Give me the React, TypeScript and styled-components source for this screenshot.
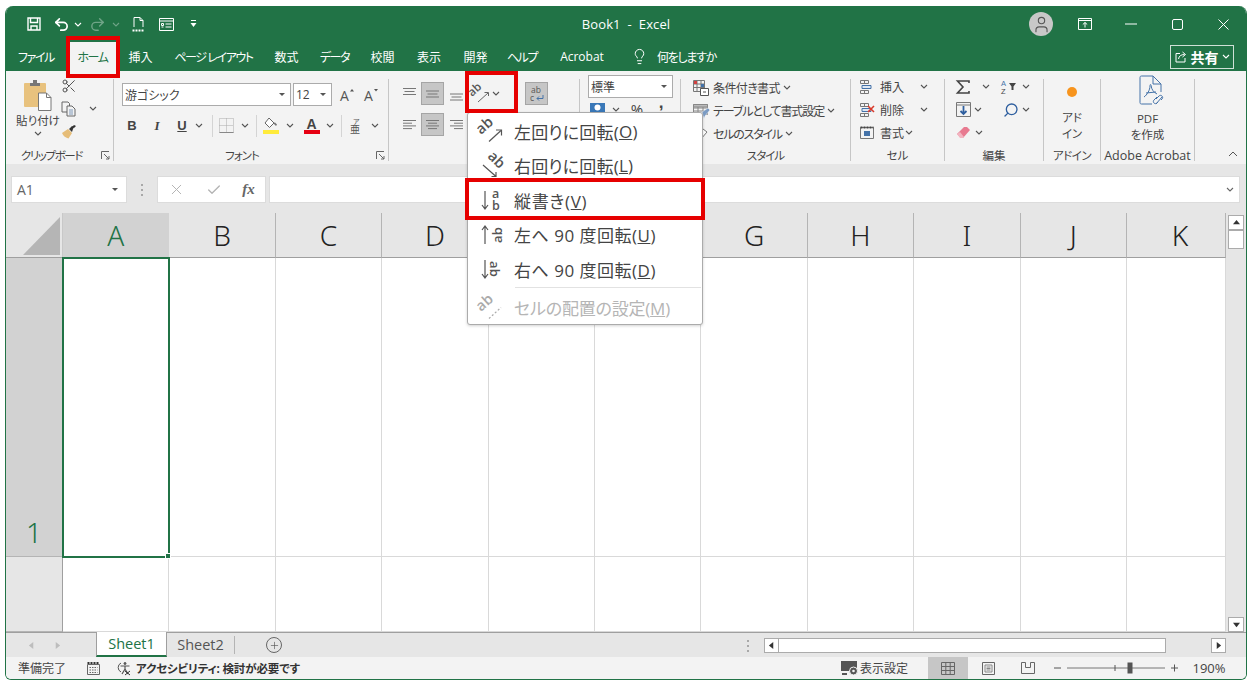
import React from 'react';
import styled, { createGlobalStyle } from 'styled-components';
import { Scissors, Lightbulb, Search, Check, X, Undo2, Redo2, Plus, User } from 'lucide-react';

const GREEN = '#217346';
const FONT = '"Open Sans", "Noto Sans CJK JP", sans-serif';

const GlobalStyle = createGlobalStyle`
  html, body {
    margin: 0;
    background: #fff;
    overflow: hidden;
  }
  body {
    font-family: ${FONT};
    font-feature-settings: "palt";
    color: #444;
  }
  svg {
    overflow: visible;
  }
`;

const Page = styled.div`
  padding: 6px 0 0 5px;
`;

const Window = styled.div`
  position: relative;
  width: 1242px;
  height: 674px;
  box-sizing: border-box;
  border: 1px solid ${GREEN};
  border-top: none;
  border-radius: 8px 8px 6px 6px;
  overflow: hidden;
  display: flex;
  flex-direction: column;
`;

const TitleBar = styled.div`
  height: 36px;
  flex: none;
  background: ${GREEN};
  color: #fff;
  display: grid;
  grid-template-columns: 1fr auto 1fr;
  align-items: center;
`;

const Quick = styled.div`
  display: flex;
  align-items: center;
  padding-left: 19px;
`;

const Slot = styled.span<{ $w: number; $dim?: boolean }>`
  width: ${p => p.$w}px;
  flex: none;
  display: inline-flex;
  align-items: center;
  justify-content: center;
  opacity: ${p => (p.$dim ? 0.35 : 1)};
`;

const Tight = styled.span<{ $s: number }>`
  letter-spacing: ${p => p.$s}px;
`;

const BookTitle = styled.div`
  font-size: 13px;
  letter-spacing: 0.1px;
`;

const WindowControls = styled.div`
  display: flex;
  align-items: center;
  justify-content: flex-end;
`;

const Avatar = styled.div`
  width: 24px;
  height: 24px;
  border-radius: 50%;
  background: #c8c8c8;
  color: #555;
  display: flex;
  align-items: center;
  justify-content: center;
  margin-right: 9px;
`;

const TabStrip = styled.div`
  height: 29px;
  flex: none;
  background: ${GREEN};
  color: #fff;
  display: flex;
  align-items: center;
  font-size: 12px;
`;

const TabItem = styled.div<{ $w: number; $active?: boolean; $kana?: boolean }>`
  width: ${p => p.$w}px;
  height: 29px;
  flex: none;
  display: flex;
  align-items: center;
  justify-content: center;
  white-space: nowrap;
  letter-spacing: ${p => (p.$kana ? '-1.4px' : '0')};
  background: ${p => (p.$active ? '#f3f3f3' : 'transparent')};
  color: ${p => (p.$active ? GREEN : '#fff')};
`;

const TellMe = styled.div`
  display: flex;
  align-items: center;
  gap: 9px;
  margin-left: 14px;
`;

const ShareButton = styled.div`
  margin-left: auto;
  margin-right: 12px;
  width: 64px;
  height: 24px;
  box-sizing: border-box;
  border: 1px solid #cfe0d6;
  display: flex;
  align-items: center;
  justify-content: center;
  gap: 3px;
  font-size: 14px;
  font-weight: 700;
`;

const Ribbon = styled.div`
  height: 93px;
  flex: none;
  box-sizing: border-box;
  padding-top: 8px;
  background: #f3f3f3;
  display: flex;
  font-size: 12px;
  color: #444;
`;

const Group = styled.div<{ $w: number }>`
  width: ${p => p.$w}px;
  height: 82px;
  flex: none;
  box-sizing: border-box;
  border-right: 1px solid #c6c6c6;
  display: flex;
  flex-direction: column;
`;

const GroupBody = styled.div<{ $pad?: number; $top?: number }>`
  height: 60px;
  flex: none;
  box-sizing: border-box;
  padding-left: ${p => p.$pad ?? 0}px;
  margin-top: ${p => p.$top ?? 0}px;
  display: flex;
  flex-direction: column;
`;

const GroupLabel = styled.div<{ $shift?: number; $tight?: number; $size?: number }>`
  margin-top: auto;
  margin-bottom: -2px;
  height: 15px;
  line-height: 15px;
  font-size: ${p => p.$size ?? 11.5}px;
  letter-spacing: ${p => p.$tight ?? 0}px;
  position: relative;
  display: grid;
  grid-template-columns: 1fr auto 1fr;
  align-items: center;
  white-space: nowrap;
  padding-right: ${p => p.$shift ?? 0}px;
`;

const Launcher = styled.span`
  position: absolute;
  right: 3px;
  top: 3px;
  display: inline-flex;
`;

const LabelText = styled.span`
  grid-column: 2;
`;

const PasteRow = styled.div`
  display: flex;
  height: 60px;
`;

const PasteColumn = styled.div`
  width: 58px;
  margin-left: 3px;
  flex: none;
  display: flex;
  flex-direction: column;
  align-items: center;
  font-size: 11.5px;
  line-height: 14px;
`;

const PasteText = styled.div`
  margin-top: 3px;
  margin-bottom: 3px;
  white-space: nowrap;
`;

const ClipColumn = styled.div`
  display: flex;
  flex-direction: column;
  margin-top: -4px;
  margin-left: -6px;
`;

const Row = styled.div<{ $h?: number; $mt?: number }>`
  display: flex;
  flex: none;
  align-items: center;
  height: ${p => p.$h ?? 23}px;
  margin-top: ${p => p.$mt ?? 0}px;
  white-space: nowrap;
`;

const Combo = styled.div<{ $w: number }>`
  width: ${p => p.$w}px;
  height: 23px;
  box-sizing: border-box;
  flex: none;
  background: #fff;
  border: 1px solid #ababab;
  display: flex;
  align-items: center;
  justify-content: space-between;
  padding: 0 5px 0 2px;
  margin-right: 2px;
  font-size: 12px;
`;

const DownMark = styled.span`
  width: 0;
  height: 0;
  border-left: 3px solid transparent;
  border-right: 3px solid transparent;
  border-top: 3px solid #555;
`;

const StrongMark = styled.span<{ $italic?: boolean; $under?: boolean; $serif?: boolean }>`
  font-family: ${p => (p.$serif ? '"Liberation Serif", serif' : '"Liberation Sans", sans-serif')};
  font-weight: 700;
  font-size: 13px;
  color: #444;
  font-style: ${p => (p.$italic ? 'italic' : 'normal')};
  text-decoration: ${p => (p.$under ? 'underline' : 'none')};
`;

const PercentMark = styled.span`
  font-size: 15px;
  line-height: 16px;
`;

const CommaMark = styled.span`
  font-family: "Liberation Sans", sans-serif;
  font-weight: 700;
  font-size: 17px;
  line-height: 12px;
  transform: translateY(-6px);
`;

const Divider = styled.span`
  width: 1px;
  height: 22px;
  background: #d4d4d4;
  flex: none;
`;

const Toggle = styled.span`
  width: 23px;
  height: 23px;
  flex: none;
  box-sizing: border-box;
  background: #c6c6c6;
  border: 1px solid #a5a5a5;
  display: inline-flex;
  align-items: center;
  justify-content: center;
`;

const Mirror = styled.span`
  display: inline-flex;
  transform: scaleX(-1);
`;

const StackedCaption = styled.div`
  display: flex;
  flex-direction: column;
  align-items: center;
  text-align: center;
  line-height: 16px;
  font-size: 11.5px;
`;

const CollapseMark = styled.div`
  margin-left: 33px;
  margin-top: 72px;
  width: 10px;
  height: 6px;
  display: flex;
`;

const FormulaBar = styled.div`
  height: 49px;
  flex: none;
  box-sizing: border-box;
  padding: 12px 6px 10px 5px;
  background: #e6e6e6;
  display: flex;
  align-items: stretch;
`;

const NameBox = styled.div`
  width: 116px;
  background: #fff;
  border: 1px solid #dcdcdc;
  box-sizing: border-box;
  display: flex;
  align-items: center;
  justify-content: space-between;
  padding: 0 8px 0 5px;
  font-size: 14px;
  color: #666;
`;

const Grip = styled.div<{ $w: number }>`
  width: ${p => p.$w}px;
  flex: none;
  display: flex;
  align-items: center;
  justify-content: center;
  color: #aaa;
`;

const FormulaButtons = styled.div`
  width: 109px;
  background: #fff;
  border: 1px solid #dcdcdc;
  box-sizing: border-box;
  display: flex;
  align-items: center;
  justify-content: space-around;
  color: #b4b4b4;
  margin-right: 3px;
`;

const Fx = styled.span`
  font-family: "Liberation Serif", serif;
  font-style: italic;
  font-size: 15px;
  font-weight: 700;
  color: #666;
`;

const FormulaInput = styled.div`
  flex: 1;
  background: #fff;
  border: 1px solid #dcdcdc;
  display: flex;
  align-items: center;
  justify-content: flex-end;
  padding-right: 5px;
`;

const SheetArea = styled.div`
  height: 419px;
  flex: none;
  display: flex;
  background: #e6e6e6;
`;

const CellGrid = styled.div`
  width: 1220px;
  flex: none;
  display: grid;
  grid-template-columns: 57px repeat(10, 106.4px) 1fr;
  grid-template-rows: 45px 299px 75px;
  background: #fff;
`;

const Corner = styled.div`
  background: #e6e6e6;
  border-bottom: 1px solid #9f9f9f;
  border-right: 1px solid #c8c8c8;
  box-sizing: border-box;
  display: flex;
  align-items: flex-end;
  justify-content: flex-end;
  padding: 0 2px 2px 0;
`;

const ColHead = styled.div<{ $selected?: boolean; $offset?: number }>`
  background: ${p => (p.$selected ? '#d2d2d2' : '#e6e6e6')};
  color: ${p => (p.$selected ? GREEN : '#222')};
  border-bottom: 1px solid ${p => (p.$selected ? GREEN : '#9f9f9f')};
  border-right: 1px solid ${p => (p.$selected ? '#d2d2d2' : '#b4b4b4')};
  box-sizing: border-box;
  display: flex;
  align-items: center;
  justify-content: center;
  padding-left: ${p => p.$offset ?? 0}px;
  font-family: "Noto Sans", sans-serif;
  font-weight: 300;
  font-size: 28px;
`;

const RowHead = styled.div<{ $selected?: boolean }>`
  background: ${p => (p.$selected ? '#d2d2d2' : '#e6e6e6')};
  color: ${GREEN};
  border-right: 1px solid #9f9f9f;
  border-bottom: 1px solid #b4b4b4;
  box-sizing: border-box;
  display: flex;
  align-items: flex-end;
  justify-content: center;
  padding-bottom: 6px;
  font-family: "Noto Sans", sans-serif;
  font-weight: 300;
  font-size: 28px;
  line-height: 36px;
`;

const Cell = styled.div<{ $active?: boolean }>`
  position: relative;
  box-sizing: border-box;
  background: #fff;
  border-right: 1px solid #d9d9d9;
  border-bottom: 1px solid #d9d9d9;
  ${p =>
    p.$active &&
    `
    outline: 2px solid ${GREEN};
    outline-offset: -1px;
    z-index: 1;
    &::after {
      content: '';
      position: absolute;
      right: -3px;
      bottom: -3px;
      width: 4px;
      height: 4px;
      background: ${GREEN};
      border: 1px solid #fff;
    }
  `}
`;

const VScroll = styled.div`
  flex: 1;
  box-sizing: border-box;
  padding: 2px 2px 0;
  display: flex;
  flex-direction: column;
`;

const ScrollButton = styled.div<{ $h: number; $w?: number }>`
  height: ${p => p.$h}px;
  width: ${p => (p.$w ? `${p.$w}px` : 'auto')};
  flex: none;
  box-sizing: border-box;
  background: #fff;
  border: 1px solid #ababab;
  display: flex;
  align-items: center;
  justify-content: center;
`;

const ScrollSpacer = styled.div`
  flex: 1;
`;

const SheetBar = styled.div`
  height: 25px;
  flex: none;
  box-sizing: border-box;
  background: #e6e6e6;
  border-top: 1px solid #9f9f9f;
  display: flex;
  align-items: stretch;
  font-size: 14.5px;
`;

const SheetTab = styled.div<{ $active?: boolean; $w: number }>`
  width: ${p => p.$w}px;
  margin-top: -1px;
  flex: none;
  box-sizing: border-box;
  display: flex;
  align-items: center;
  justify-content: center;
  color: ${p => (p.$active ? GREEN : '#555')};
  background: ${p => (p.$active ? '#fff' : 'transparent')};
  border-bottom: ${p => (p.$active ? `2px solid ${GREEN}` : 'none')};
  border-left: ${p => (p.$active ? '1px solid #9f9f9f' : 'none')};
  border-right: ${p => (p.$active ? '1px solid #9f9f9f' : 'none')};
`;

const TabSep = styled.span`
  width: 1px;
  height: 18px;
  align-self: center;
  background: #b4b4b4;
  margin-right: 28px;
`;

const AddSheet = styled.span`
  width: 16px;
  height: 16px;
  align-self: center;
  box-sizing: border-box;
  border: 1px solid #666;
  border-radius: 50%;
  color: #555;
  display: flex;
  align-items: center;
  justify-content: center;
`;

const HScroll = styled.div`
  margin-left: auto;
  margin-right: 20px;
  padding: 5px 0 4px;
  display: flex;
  align-items: stretch;
`;

const HDots = styled(Grip)`
  margin-right: 4px;
`;

const HThumb = styled.div`
  width: 387px;
  box-sizing: border-box;
  background: #fff;
  border: 1px solid #ababab;
  border-left: none;
  margin-right: 45px;
`;

const StatusBar = styled.div`
  flex: 1;
  background: #f3f3f3;
  display: flex;
  align-items: center;
  font-size: 12px;
  color: #444;
`;

const ReadyText = styled.span`
  margin-left: 12px;
  width: 69px;
`;

const A11yText = styled.span`
  margin-left: 4px;
  font-size: 11.5px;
  font-weight: 700;
  letter-spacing: -0.15px;
  color: #333;
`;

const DisplaySettings = styled.div`
  margin-left: auto;
  display: flex;
  align-items: center;
  font-size: 12px;
  margin-right: 20px;
`;

const ViewButton = styled.div<{ $active?: boolean }>`
  width: 40px;
  height: 22px;
  display: flex;
  align-items: center;
  justify-content: center;
  background: ${p => (p.$active ? '#c6c6c6' : 'transparent')};
`;

const ZoomText = styled.span`
  width: 54px;
  margin: 0 10px 0 4px;
  text-align: center;
  font-size: 13px;
`;

const Menu = styled.div`
  position: absolute;
  left: 461px;
  top: 106px;
  width: 236px;
  height: 213px;
  box-sizing: border-box;
  background: #fff;
  border: 1px solid #ababab;
  border-radius: 3px;
  box-shadow: 0 1px 3px rgba(0, 0, 0, 0.18);
  padding-top: 1px;
  z-index: 5;
`;

const MenuItem = styled.div<{ $disabled?: boolean; $h?: number }>`
  height: ${p => p.$h ?? 34.5}px;
  display: flex;
  align-items: center;
  font-size: 17px;
  letter-spacing: 0.2px;
  color: ${p => (p.$disabled ? '#b5b5b5' : '#444')};
`;

const MenuIcon = styled.span`
  width: 46px;
  flex: none;
  display: flex;
  justify-content: center;
`;

const MenuSep = styled.div`
  height: 1px;
  margin: 0 1px 0 47px;
  background: #e2e2e2;
`;

const Key = styled.span`
  text-decoration: underline;
`;

const Highlight = styled.div<{ $x: number; $y: number; $w: number; $h: number }>`
  position: absolute;
  left: ${p => p.$x}px;
  top: ${p => p.$y}px;
  width: ${p => p.$w}px;
  height: ${p => p.$h}px;
  box-sizing: border-box;
  border: 4px solid #e60000;
  z-index: 10;
`;

/* drawn icons */

const Caret = ({ color = '#555' }: { color?: string }) => (
  <svg width="8" height="5" viewBox="0 0 8 5">
    <path d="M1 1l3 3 3-3" fill="none" stroke={color} strokeWidth="1.1" />
  </svg>
);

const LauncherIcon = () => (
  <svg width="9" height="9" viewBox="0 0 9 9" fill="none" stroke="#666">
    <path d="M.5 8V.5H8" />
    <path d="M3 3l5 5M8 5v3H5" />
  </svg>
);

const SaveIcon = () => (
  <svg width="14" height="14" viewBox="0 0 14 14" fill="none" stroke="#fff" strokeWidth="1.4">
    <path d="M1 1h12v12H1z" />
    <path d="M3.5 1v4.5h7V1M4 13V9h6v4" />
  </svg>
);

const DocPreviewIcon = () => (
  <svg width="13" height="15" viewBox="0 0 13 15" fill="none" stroke="#fff">
    <path d="M2 10V.5h6l3 3V10M8 .5v3h3" />
    <path d="M.5 13.5h12" strokeWidth="2" strokeDasharray="2 1" />
  </svg>
);

const FormIcon = () => (
  <svg width="15" height="13" viewBox="0 0 15 13" fill="none" stroke="#fff">
    <path d="M.5.5h14v12H.5z" />
    <path d="M.5 3h14M2.5 5.5h2v2h-2zM2.5 9h2M6.5 6h6M6.5 9h6" />
  </svg>
);

const CustomizeIcon = () => (
  <svg width="7" height="8" viewBox="0 0 7 8" fill="#fff">
    <path d="M1 0h5v1H1zM.5 3h6L3.5 7z" />
  </svg>
);

const RibbonModeIcon = () => (
  <svg width="14" height="12" viewBox="0 0 14 12" fill="none" stroke="#fff">
    <path d="M.5.5h13v11H.5zM.5 2.5h13" />
    <path d="M7 9.5V4.5M4.8 6.5L7 4.5l2.2 2" />
  </svg>
);

const MinimizeIcon = () => (
  <svg width="12" height="2" viewBox="0 0 12 2">
    <path d="M0 1h12" stroke="#fff" />
  </svg>
);

const MaximizeIcon = () => (
  <svg width="11" height="11" viewBox="0 0 11 11" fill="none" stroke="#fff">
    <rect x=".5" y=".5" width="10" height="10" rx="1.5" />
  </svg>
);

const CloseIcon = () => (
  <svg width="11" height="11" viewBox="0 0 11 11" fill="none" stroke="#fff">
    <path d="M.5.5l10 10M10.5.5l-10 10" />
  </svg>
);

const ShareIcon = () => (
  <svg width="13" height="12" viewBox="0 0 13 12" fill="none" stroke="#fff">
    <path d="M5 2.5H1V11h9V7" />
    <path d="M3.5 8c.5-3 2.500-4.500 6-4.500M7.500 1l3 2.500-3 2.500" />
  </svg>
);

const PasteIcon = () => (
  <svg width="30" height="32" viewBox="0 0 30 32">
    <rect x="1" y="4" width="22" height="24" rx="1" fill="#e8c27e" />
    <path d="M7 4h10v3H7zM10 1h4v3h-4z" fill="#777" />
    <path d="M15.500 14h8l4.500 4.500v13h-12.500z" fill="#fff" stroke="#777" />
    <path d="M23.500 14v4.500h4.500" fill="none" stroke="#777" />
  </svg>
);

const CopyIcon = () => (
  <svg width="15" height="16" viewBox="0 0 15 16" fill="none" stroke="#666">
    <path d="M1 1h6l1.500 1.500V11H1z" />
    <path d="M6 5h5l3 3v7H6z" fill="#f3f3f3" />
    <path d="M8 9h4M8 11h4M8 13h4" stroke="#7e98b8" />
  </svg>
);

const BrushIcon = () => (
  <svg width="16" height="15" viewBox="0 0 16 15">
    <path d="M1 9l6-4 4 4-3.500 5.500C5 14 2 12 1 9z" fill="#e6bd78" />
    <path d="M8 5l3-3 2 1-1 2-1 3z" fill="#333" />
    <path d="M11 3l2-2 2 1-2 2z" fill="#333" />
  </svg>
);

const GrowIcon = ({ down }: { down?: boolean }) => (
  <svg width="15" height="14" viewBox="0 0 15 14">
    <text x="0" y="13" fontSize="14" fontFamily="Open Sans, sans-serif" fill="#555">A</text>
    <path d={down ? 'M10 1h4l-2 2.500z' : 'M10 3.500h4L12 1z'} fill="#555" />
  </svg>
);

const BorderIcon = () => (
  <svg width="15" height="15" viewBox="0 0 15 15" fill="none" stroke="#aaa">
    <path d="M.5.500h14v14H.5zM7.500.500v14M.5 7.500h14" strokeDasharray="1 1" />
    <path d="M.5 14.500h14" stroke="#888" />
  </svg>
);

const FillIcon = () => (
  <svg width="16" height="17" viewBox="0 0 16 17">
    <path d="M6 1l5 5-4.500 4.500L2 6z" fill="#fff" stroke="#666" />
    <path d="M10 6l3 3 1-1.500-2-2z" fill="#777" />
    <rect x="0" y="13" width="16" height="4" fill="#ffeb3b" />
  </svg>
);

const FontColorIcon = () => (
  <svg width="16" height="17" viewBox="0 0 16 17">
    <text x="2.500" y="11.500" fontSize="14" fontWeight="700" fontFamily="Liberation Sans, sans-serif" fill="#444">A</text>
    <rect x="0" y="13" width="16" height="4" fill="#e60012" />
  </svg>
);

const PhoneticIcon = () => (
  <svg width="12" height="16" viewBox="0 0 12 16">
    <text x="3" y="6" fontSize="7" fill="#555" fontFamily="Noto Sans CJK JP, sans-serif">ア</text>
    <text x="0" y="15" fontSize="10" fill="#555" fontFamily="Noto Sans CJK JP, sans-serif">亜</text>
  </svg>
);

const lineWidths: Record<string, number[]> = {
  left: [13, 9, 13, 9],
  center: [13, 9, 13, 9],
  right: [13, 9, 13, 9],
};

const HAlignIcon = ({ kind }: { kind: 'left' | 'center' | 'right' }) => (
  <svg width="15" height="11" viewBox="0 0 15 11" stroke="#777">
    {lineWidths[kind].map((w, i) => {
      const x = kind === 'left' ? 1 : kind === 'center' ? (15 - w) / 2 : 14 - w;
      return <path key={i} d={`M${x} ${1.5 + i * 2.7}h${w}`} />;
    })}
  </svg>
);

const VAlignIcon = ({ kind }: { kind: 'top' | 'middle' | 'bottom' }) => {
  const start = kind === 'top' ? 1.5 : kind === 'middle' ? 4 : 7;
  return (
    <svg width="15" height="14" viewBox="0 0 15 14" stroke="#777">
      <path d={`M1 ${start}h13M2.500 ${start + 3}h10M1 ${start + 6}h13`} />
    </svg>
  );
};

const abText = (transform: string, size: number, color: string) => (
  <text transform={transform} fontSize={size} fontWeight="600" fontFamily="Open Sans, sans-serif" fill={color}>ab</text>
);

const OrientIcon = () => (
  <svg width="20" height="20" viewBox="0 0 20 20" fill="none">
    {abText('translate(2 13) rotate(-42)', 11.500, '#555')}
    <path d="M8 18L18 9M14.500 8.500H18.500V12" stroke="#666" />
  </svg>
);

const WrapIcon = () => (
  <svg width="18" height="18" viewBox="0 0 18 18" fill="none">
    <text x="3" y="8" fontSize="8.500" fontFamily="Open Sans, sans-serif" fill="#555">ab</text>
    <text x="2" y="16" fontSize="8.500" fontFamily="Open Sans, sans-serif" fill="#555">c</text>
    <path d="M15 10v3.500H9M11 11.500l-2 2 2 2" stroke="#4472a8" />
  </svg>
);

const CurrencyIcon = () => (
  <svg width="18" height="15" viewBox="0 0 18 15">
    <rect x="1" y="1" width="15" height="9" fill="#3a78b8" />
    <circle cx="8.500" cy="5.500" r="3" fill="#fff" />
    <path d="M4 11h12v3H4z" fill="#e6bd78" />
  </svg>
);

const ConditionalIcon = () => (
  <svg width="16" height="16" viewBox="0 0 16 16" fill="none" stroke="#777">
    <path d="M.5.500h11v11H.5zM.5 4h11M.5 7.500h11M4 .5v11M8 .5v11" />
    <path d="M1 1h3v3H1z" fill="#d04040" stroke="none" />
    <path d="M8 4h3v3H8z" fill="#4472a8" stroke="none" />
    <path d="M7.500 8.500h8v7h-8z" fill="#fff" stroke="#555" />
    <path d="M10 12h3" stroke="#555" />
  </svg>
);

const TableFormatIcon = () => (
  <svg width="17" height="16" viewBox="0 0 17 16" fill="none" stroke="#888">
    <path d="M.5 1.500h14v10H.5zM.5 5h14M.5 8h14M5 1.500v10M10 1.500v10" />
    <path d="M.5 1.500h14V4H.5z" fill="#bbb" />
    <path d="M9 9l6-4 2 2-5 6-1 3z" fill="#7c9cc4" stroke="#fff" strokeWidth=".5" />
  </svg>
);

const CellStyleIcon = () => (
  <svg width="16" height="16" viewBox="0 0 16 16">
    <path d="M4 9l6-6 4 3-6 7z" fill="#fff" stroke="#777" />
    <path d="M2 12c2-1 3-1 5 1l-2 2c-2 0-3-1-3-3z" fill="#7c9cc4" />
  </svg>
);

const CellsIcon = ({ kind }: { kind: 'insert' | 'delete' | 'format' }) => (
  <svg width="16" height="16" viewBox="0 0 16 16" fill="none" stroke="#777">
    {kind === 'format' ? (
      <>
        <path d="M1.500 2.500h13v11h-13z" />
        <path d="M1.500 2.500h13" strokeDasharray="2 1" stroke="#444" strokeWidth="2" />
        <path d="M5 6h6v5H5z" fill="#4472a8" stroke="none" />
      </>
    ) : (
      <>
        <path d="M1.500 1.500h8v3h-8zM1.500 11.500h8v3h-8zM5.500 1.500v3M5.500 11.500v3" />
        <path d="M3 6.500h9v3H3z" fill="#dfe8f3" stroke="#4472a8" />
        {kind === 'delete' && <path d="M9 4l6 6M15 4l-6 6" stroke="#d93a2b" strokeWidth="1.600" />}
      </>
    )}
  </svg>
);

const SigmaIcon = () => (
  <svg width="14" height="14" viewBox="0 0 14 14" fill="none" stroke="#444" strokeWidth="1.600">
    <path d="M13 3V1H1.500L7 7l-5.500 6H13v-2" />
  </svg>
);

const SortIcon = () => (
  <svg width="16" height="16" viewBox="0 0 16 16">
    <text x="0" y="7" fontSize="7.500" fill="#4472a8" fontFamily="Liberation Sans, sans-serif">A</text>
    <text x="0" y="15" fontSize="7.500" fill="#444" fontFamily="Liberation Sans, sans-serif">Z</text>
    <path d="M8 4h7l-2.500 3.500V11h-2V7.500z" fill="#444" />
  </svg>
);

const FillDownIcon = () => (
  <svg width="15" height="15" viewBox="0 0 15 15" fill="none" stroke="#777">
    <path d="M.5.500h14v14H.5zM.5 3h14" />
    <path d="M7.500 4v8M4.500 9l3 3 3-3" stroke="#2f5f9f" strokeWidth="1.800" />
  </svg>
);

const EraserIcon = () => (
  <svg width="15" height="13" viewBox="0 0 15 13">
    <path d="M1 8l7-7h3l3 3-7 8H5z" fill="#e87a90" />
    <path d="M1 8l3 4h3l1-1-4-5z" fill="#f3b4c0" />
  </svg>
);

const AcrobatIcon = () => (
  <svg width="30" height="36" viewBox="-5 0 30 36" fill="none" stroke="#4472a8">
    <path d="M14 29H3.500c-1 0-1.500-.5-1.500-1.500v-25c0-1 .5-1.500 1.500-1.500H15l8 8v8" />
    <path d="M15 1v8h8" />
    <path d="M6 22c3-2 6-7 6-11 0-2 1-2 1.200 0 .3 3 2 6 5.800 8M8 18l10-1" strokeWidth="1" />
    <path d="M18 24l3-3c2-2 5 1 3 3l-1 1M20 27l-1 1c-2 2-5-1-3-3l3-3M18 29l6-7" />
  </svg>
);

const CornerTriangle = () => (
  <svg width="37" height="38" viewBox="0 0 37 38">
    <path d="M37 0v38H0z" fill="#b5b5b5" />
  </svg>
);

const Triangle = ({ dir, color = '#333', size = 7 }: { dir: 'up' | 'down' | 'left' | 'right'; color?: string; size?: number }) => {
  const paths = { up: 'M0 6h8L4 1z', down: 'M0 2h8L4 7z', left: 'M6 0v8L1 4z', right: 'M2 0v8l5-4z' };
  return (
    <svg width={size} height={size} viewBox="0 0 8 8">
      <path d={paths[dir]} fill={color} />
    </svg>
  );
};

const DotsIcon = () => (
  <svg width="3" height="12" viewBox="0 0 3 12" fill="#a8a8a8">
    <rect y="0" width="2" height="2" />
    <rect y="5" width="2" height="2" />
    <rect y="10" width="2" height="2" />
  </svg>
);

const MacroIcon = () => (
  <svg width="13" height="13" viewBox="0 0 13 13" fill="none" stroke="#666">
    <path d="M.5 2.500h12v10H.5z" />
    <path d="M.5 1h12" strokeDasharray="2 1" stroke="#333" strokeWidth="2" />
    <path d="M2.500 5.500h8M2.500 8h8M2.500 10.500h8" strokeDasharray="1.500 1" />
  </svg>
);

const A11yIcon = () => (
  <svg width="16" height="15" viewBox="0 0 16 15" fill="none" stroke="#555">
    <path d="M5 2a5 5 0 0 0 0 9" />
    <circle cx="9" cy="2.500" r="1" fill="#555" />
    <path d="M4.500 5h9M9 5v3l-3 5M9 8l3 5" strokeWidth="1.200" />
    <path d="M9 10l5 4M14 10l-5 4" stroke="#333" />
  </svg>
);

const DisplayIcon = () => (
  <svg width="19" height="15" viewBox="0 0 19 15">
    <path d="M0 0h16v10H0z" fill="#555" />
    <circle cx="12.500" cy="10" r="4" fill="#555" stroke="#f3f3f3" />
    <circle cx="12.500" cy="10" r="1.300" fill="#f3f3f3" />
    <path d="M1 13h5" stroke="#555" strokeWidth="2" />
  </svg>
);

const NormalViewIcon = () => (
  <svg width="14" height="13" viewBox="0 0 14 13" fill="none" stroke="#666">
    <path d="M.5.500h13v12H.5zM.5 4.500h13M.5 8.500h13M4.800.5v12M9.200.5v12" />
  </svg>
);

const PageViewIcon = () => (
  <svg width="13" height="13" viewBox="0 0 13 13" fill="none" stroke="#666">
    <path d="M.5.500h12v12H.5z" />
    <path d="M3 3h7v7H3zM4.500 5h4M4.500 6.500h4M4.500 8h4" stroke="#888" />
  </svg>
);

const BreakViewIcon = () => (
  <svg width="14" height="12" viewBox="0 0 14 12" fill="none" stroke="#666">
    <path d="M.5.500v11h13V.5M.5.500h4v5h5v-5h4" />
  </svg>
);

const SliderIcon = () => (
  <svg width="124" height="14" viewBox="0 0 124 14" fill="none" stroke="#555">
    <path d="M0 7h7M117 7h7M120.500 3.500v7" />
    <path d="M13 7h98" stroke="#777" />
    <path d="M61 4v6" />
    <rect x="74" y="2" width="4" height="10" fill="#555" />
  </svg>
);

const CollapseIcon = () => (
  <svg width="10" height="6" viewBox="0 0 10 6">
    <path d="M1 5l4-4 4 4" fill="none" stroke="#555" />
  </svg>
);

const menuStroke = (c: string) => ({ stroke: c, fill: 'none' });

const CcwIcon = ({ color = '#555', dotted }: { color?: string; dotted?: boolean }) => (
  <svg width="24" height="24" viewBox="0 0 24 24">
    {abText('translate(2 16) rotate(-42)', 14.500, color)}
    <path d="M10 22.500L22 11.500" {...menuStroke(color)} strokeWidth="1.200" strokeDasharray={dotted ? '2 2' : undefined} />
    {!dotted && <path d="M17 11h5.500v5.500" {...menuStroke(color)} strokeWidth="1.200" />}
  </svg>
);

const CwIcon = () => (
  <svg width="24" height="24" viewBox="0 0 24 24">
    {abText('translate(8 3) rotate(45)', 14.500, '#555')}
    <path d="M4 11l13 11.500M17 18v4.500h-4.500" {...menuStroke('#555')} strokeWidth="1.200" />
  </svg>
);

const VerticalIcon = () => (
  <svg width="24" height="24" viewBox="0 0 24 24">
    <path d="M6 3v18M3 17l3 4 3-4" {...menuStroke('#555')} strokeWidth="1.200" />
    <text x="13" y="10" fontSize="12.500" fontWeight="600" fontFamily="Open Sans, sans-serif" fill="#555">a</text>
    <text x="13" y="22" fontSize="12.500" fontWeight="600" fontFamily="Open Sans, sans-serif" fill="#555">b</text>
  </svg>
);

const TurnIcon = ({ up }: { up?: boolean }) => (
  <svg width="24" height="24" viewBox="0 0 24 24">
    <path
      d={up ? 'M6 21V3M3 7l3-4 3 4' : 'M6 3v18M3 17l3 4 3-4'}
      {...menuStroke('#555')}
      strokeWidth="1.200"
    />
    {abText(up ? 'translate(23 20) rotate(-90)' : 'translate(11 4) rotate(90)', 13, '#555')}
  </svg>
);

const columns = ['A', 'B', 'C', 'D', 'E', 'F', 'G', 'H', 'I', 'J', 'K'];

const App: React.FC = () => {
  return (
    <Page>
      <GlobalStyle />
      <Window>
        <TitleBar>
          <Quick>
            <Slot $w={18}><SaveIcon /></Slot>
            <Slot $w={9} />
            <Slot $w={18}><Undo2 size={17} strokeWidth={2.4} /></Slot>
            <Slot $w={16}><Caret color="#fff" /></Slot>
            <Slot $w={23} $dim><Redo2 size={17} strokeWidth={2} /></Slot>
            <Slot $w={14} $dim><Caret color="#fff" /></Slot>
            <Slot $w={30}><DocPreviewIcon /></Slot>
            <Slot $w={26}><FormIcon /></Slot>
            <Slot $w={28}><CustomizeIcon /></Slot>
          </Quick>
          <BookTitle>Book1&nbsp; - &nbsp;Excel</BookTitle>
          <WindowControls>
            <Avatar><User size={19} strokeWidth={1.4} /></Avatar>
            <Slot $w={46}><RibbonModeIcon /></Slot>
            <Slot $w={46}><MinimizeIcon /></Slot>
            <Slot $w={46}><MaximizeIcon /></Slot>
            <Slot $w={46}><CloseIcon /></Slot>
          </WindowControls>
        </TitleBar>

        <TabStrip>
          <TabItem $w={60} $kana>ファイル</TabItem>
          <TabItem $w={53} $active $kana>ホーム</TabItem>
          <TabItem $w={43}>挿入</TabItem>
          <TabItem $w={103} $kana>ページ レイアウト</TabItem>
          <TabItem $w={43}>数式</TabItem>
          <TabItem $w={53} $kana>データ</TabItem>
          <TabItem $w={43}>校閲</TabItem>
          <TabItem $w={50}>表示</TabItem>
          <TabItem $w={43}>開発</TabItem>
          <TabItem $w={50} $kana>ヘルプ</TabItem>
          <TabItem $w={70}>Acrobat</TabItem>
          <TellMe>
            <Lightbulb size={17} strokeWidth={1.4} />
            <Tight $s={-1.3}>何をしますか</Tight>
          </TellMe>
          <ShareButton>
            <ShareIcon />
            共有
            <Caret color="#fff" />
          </ShareButton>
        </TabStrip>

        <Ribbon>
          <Group $w={108}>
            <PasteRow>
              <PasteColumn>
                <PasteIcon />
                <PasteText>貼り付け</PasteText>
                <Caret />
              </PasteColumn>
              <ClipColumn>
                <Row $h={22}><Scissors size={16} strokeWidth={1.5} color="#555" /></Row>
                <Row $h={23}><CopyIcon /><Slot $w={34}><Caret /></Slot></Row>
                <Row $h={22}><BrushIcon /></Row>
              </ClipColumn>
            </PasteRow>
            <GroupLabel $shift={16} $tight={-1.4}>
              <LabelText>クリップボード</LabelText>
              <Launcher><LauncherIcon /></Launcher>
            </GroupLabel>
          </Group>

          <Group $w={275}>
            <GroupBody $pad={8} $top={4}>
              <Row>
                <Combo $w={169}>游ゴシック<DownMark /></Combo>
                <Combo $w={39}>12<DownMark /></Combo>
                <Slot $w={26}><GrowIcon /></Slot>
                <Slot $w={22}><GrowIcon down /></Slot>
              </Row>
              <Row $mt={8}>
                <Slot $w={20}><StrongMark>B</StrongMark></Slot>
                <Slot $w={30}><StrongMark $italic $serif>I</StrongMark></Slot>
                <Slot $w={20}><StrongMark $under>U</StrongMark></Slot>
                <Slot $w={14}><Caret /></Slot>
                <Slot $w={6} />
                <Divider />
                <Slot $w={27}><BorderIcon /></Slot>
                <Slot $w={10}><Caret /></Slot>
                <Slot $w={6} />
                <Divider />
                <Slot $w={28}><FillIcon /></Slot>
                <Slot $w={10}><Caret /></Slot>
                <Slot $w={3} />
                <Slot $w={27}><FontColorIcon /></Slot>
                <Slot $w={10}><Caret /></Slot>
                <Slot $w={6} />
                <Divider />
                <Slot $w={28}><PhoneticIcon /></Slot>
                <Slot $w={10}><Caret /></Slot>
              </Row>
            </GroupBody>
            <GroupLabel $shift={18} $tight={-1}>
              <LabelText>フォント</LabelText>
              <Launcher><LauncherIcon /></Launcher>
            </GroupLabel>
          </Group>

          <Group $w={191}>
            <GroupBody $pad={8} $top={3}>
              <Row>
                <Slot $w={24}><VAlignIcon kind="top" /></Slot>
                <Toggle><VAlignIcon kind="middle" /></Toggle>
                <Slot $w={25}><VAlignIcon kind="bottom" /></Slot>
                <Slot $w={22}><OrientIcon /></Slot>
                <Slot $w={10}><Caret /></Slot>
                <Slot $w={24} />
                <Toggle><WrapIcon /></Toggle>
              </Row>
              <Row $mt={8}>
                <Slot $w={24}><HAlignIcon kind="left" /></Slot>
                <Toggle><HAlignIcon kind="center" /></Toggle>
                <Slot $w={25}><HAlignIcon kind="right" /></Slot>
              </Row>
            </GroupBody>
            <GroupLabel>
              <LabelText>配置</LabelText>
              <Launcher><LauncherIcon /></Launcher>
            </GroupLabel>
          </Group>

          <Group $w={101}>
            <GroupBody $pad={8} $top={-4}>
              <Row>
                <Combo $w={85}>標準<DownMark /></Combo>
              </Row>
              <Row $mt={-1} $h={24}>
                <Slot $w={20}><CurrencyIcon /></Slot>
                <Slot $w={16}><Caret /></Slot>
                <Slot $w={26}><PercentMark>%</PercentMark></Slot>
                <Slot $w={22}><CommaMark>,</CommaMark></Slot>
              </Row>
            </GroupBody>
            <GroupLabel>
              <LabelText>数値</LabelText>
            </GroupLabel>
          </Group>

          <Group $w={170}>
            <GroupBody $pad={12} $top={-3}>
              <Row><ConditionalIcon /><Slot $w={4} /><Tight $s={-0.6}>条件付き書式</Tight><Slot $w={14}><Caret /></Slot></Row>
              <Row><TableFormatIcon /><Slot $w={3} /><Tight $s={-1.1}>テーブルとして書式設定</Tight><Slot $w={14}><Caret /></Slot></Row>
              <Row><CellStyleIcon /><Slot $w={4} /><Tight $s={-1.2}>セルのスタイル</Tight><Slot $w={14}><Caret /></Slot></Row>
            </GroupBody>
            <GroupLabel $tight={-1}>
              <LabelText>スタイル</LabelText>
            </GroupLabel>
          </Group>

          <Group $w={94}>
            <GroupBody $pad={8} $top={-4}>
              <Row><CellsIcon kind="insert" /><Slot $w={5} />挿入<Slot $w={16} /><Caret /></Row>
              <Row><CellsIcon kind="delete" /><Slot $w={5} />削除<Slot $w={16} /><Caret /></Row>
              <Row><CellsIcon kind="format" /><Slot $w={5} />書式<Slot $w={10}><Caret /></Slot></Row>
            </GroupBody>
            <GroupLabel>
              <LabelText>セル</LabelText>
            </GroupLabel>
          </Group>

          <Group $w={99}>
            <GroupBody $pad={10} $top={-4}>
              <Row>
                <Slot $w={16}><SigmaIcon /></Slot>
                <Slot $w={30}><Caret /></Slot>
                <Slot $w={16}><SortIcon /></Slot>
                <Slot $w={18}><Caret /></Slot>
              </Row>
              <Row>
                <Slot $w={16}><FillDownIcon /></Slot>
                <Slot $w={14}><Caret /></Slot>
                <Slot $w={18} />
                <Slot $w={16}><Mirror><Search size={16} strokeWidth={2} color="#2f5f9f" /></Mirror></Slot>
                <Slot $w={14}><Caret /></Slot>
              </Row>
              <Row>
                <Slot $w={16}><EraserIcon /></Slot>
                <Slot $w={16}><Caret /></Slot>
              </Row>
            </GroupBody>
            <GroupLabel>
              <LabelText>編集</LabelText>
            </GroupLabel>
          </Group>

          <Group $w={57}>
            <GroupBody $top={-1}>
              <StackedCaption>
                <Slot $w={57}>
                  <svg width="28" height="32" viewBox="0 0 28 32"><circle cx="14" cy="14" r="5" fill="#f7941d" /></svg>
                </Slot>
                <span>アド</span>
                <span>イン</span>
              </StackedCaption>
            </GroupBody>
            <GroupLabel $tight={-0.5}>
              <LabelText>アドイン</LabelText>
            </GroupLabel>
          </Group>

          <Group $w={94}>
            <GroupBody $top={-4}>
              <StackedCaption>
                <AcrobatIcon />
                <span>PDF</span>
                <span>を作成</span>
              </StackedCaption>
            </GroupBody>
            <GroupLabel $size={12.5}>
              <LabelText>Adobe Acrobat</LabelText>
            </GroupLabel>
          </Group>

          <CollapseMark><CollapseIcon /></CollapseMark>
        </Ribbon>

        <FormulaBar>
          <NameBox>A1<DownMark /></NameBox>
          <Grip $w={30}><DotsIcon /></Grip>
          <FormulaButtons>
            <X size={17} strokeWidth={1.4} />
            <Check size={16} strokeWidth={2} />
            <Fx>fx</Fx>
          </FormulaButtons>
          <FormulaInput><Caret color="#666" /></FormulaInput>
        </FormulaBar>

        <SheetArea>
          <CellGrid>
            <Corner><CornerTriangle /></Corner>
            {columns.map(c => (
              <ColHead key={c} $selected={c === 'A'} $offset={c === 'K' ? 8 : 0}>{c}</ColHead>
            ))}
            <RowHead $selected>1</RowHead>
            {columns.map(c => (
              <Cell key={c} $active={c === 'A'} />
            ))}
            <RowHead />
            {columns.map(c => (
              <Cell key={c} />
            ))}
          </CellGrid>
          <VScroll>
            <ScrollButton $h={15}><Triangle dir="up" /></ScrollButton>
            <ScrollButton $h={19} />
            <ScrollSpacer />
            <ScrollButton $h={15}><Triangle dir="down" /></ScrollButton>
          </VScroll>
        </SheetArea>

        <SheetBar>
          <Slot $w={16} />
          <Slot $w={18}><Triangle dir="left" color="#bdbdbd" /></Slot>
          <Slot $w={8} />
          <Slot $w={18}><Triangle dir="right" color="#bdbdbd" /></Slot>
          <Slot $w={30} />
          <SheetTab $active $w={71}>Sheet1</SheetTab>
          <SheetTab $w={67}>Sheet2</SheetTab>
          <TabSep />
          <Slot $w={3} />
          <AddSheet><Plus size={11} strokeWidth={1.4} /></AddSheet>
          <HScroll>
            <HDots $w={24}><DotsIcon /></HDots>
            <ScrollButton $h={15} $w={15}><Triangle dir="left" /></ScrollButton>
            <HThumb />
            <ScrollButton $h={15} $w={15}><Triangle dir="right" /></ScrollButton>
          </HScroll>
        </SheetBar>

        <StatusBar>
          <ReadyText>準備完了</ReadyText>
          <MacroIcon />
          <Slot $w={16} />
          <A11yIcon />
          <A11yText>アクセシビリティ: 検討が必要です</A11yText>
          <DisplaySettings><DisplayIcon />表示設定</DisplaySettings>
          <ViewButton $active><NormalViewIcon /></ViewButton>
          <ViewButton><PageViewIcon /></ViewButton>
          <ViewButton><BreakViewIcon /></ViewButton>
          <Slot $w={6} />
          <SliderIcon />
          <ZoomText>190%</ZoomText>
        </StatusBar>

        <Menu>
          <MenuItem><MenuIcon><CcwIcon /></MenuIcon>左回りに回転(<Key>O</Key>)</MenuItem>
          <MenuItem><MenuIcon><CwIcon /></MenuIcon>右回りに回転(<Key>L</Key>)</MenuItem>
          <MenuItem><MenuIcon><VerticalIcon /></MenuIcon><Tight $s={0.7}>縦書き(<Key>V</Key>)</Tight></MenuItem>
          <MenuItem><MenuIcon><TurnIcon up /></MenuIcon><Tight $s={0.5}>左へ 90 度回転(<Key>U</Key>)</Tight></MenuItem>
          <MenuItem><MenuIcon><TurnIcon /></MenuIcon><Tight $s={0.5}>右へ 90 度回転(<Key>D</Key>)</Tight></MenuItem>
          <MenuSep />
          <MenuItem $disabled $h={40}><MenuIcon><CcwIcon color="#aaa" dotted /></MenuIcon><Tight $s={-0.2}>セルの配置の設定(<Key>M</Key>)</Tight></MenuItem>
        </Menu>

        <Highlight $x={60} $y={30} $w={54} $h={42} />
        <Highlight $x={459} $y={65} $w={53} $h={42} />
        <Highlight $x={459} $y={172} $w={240} $h={42} />
      </Window>
    </Page>
  );
};

export default App;
